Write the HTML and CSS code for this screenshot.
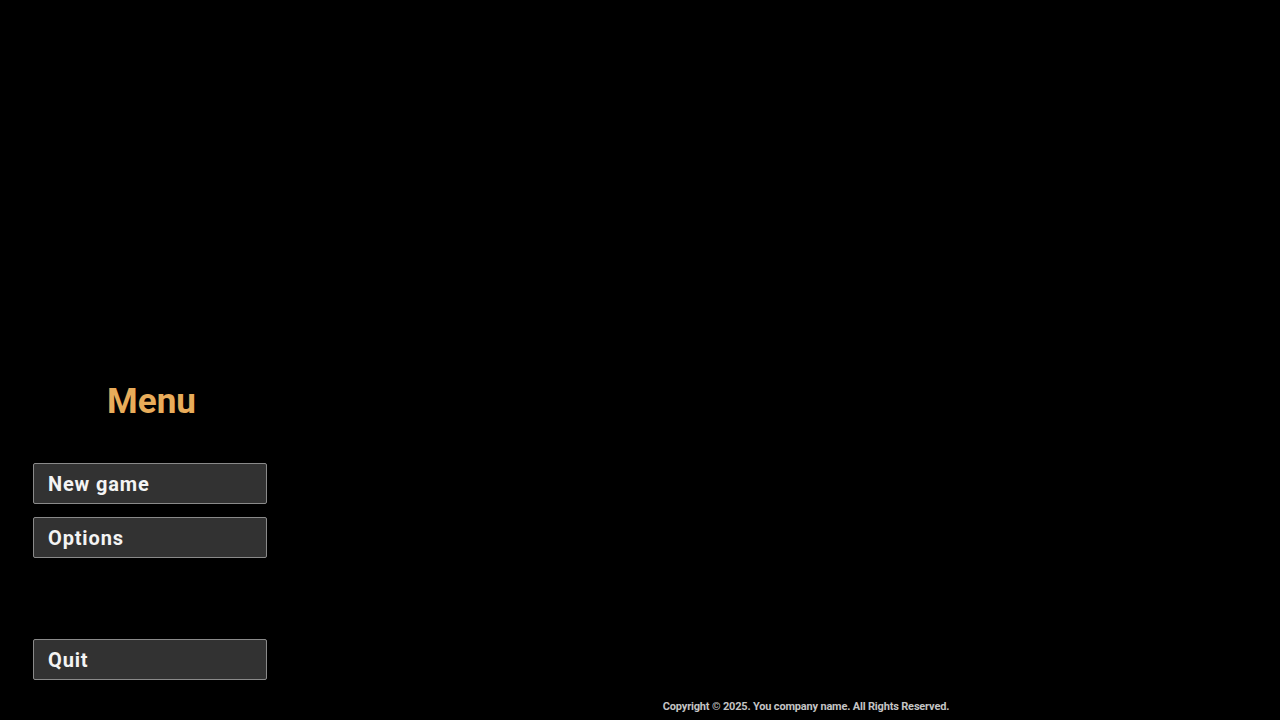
FILE: index.html
```html
<!DOCTYPE html>
<html lang="en">
<head>
  <meta charset="UTF-8">
  <meta name="viewport" content="width=device-width, initial-scale=1.0">
  <title>Menu</title>
  <link rel="stylesheet" href="styles.css">
</head>
<body>
  <div class="screen">
    <aside class="sidebar">
      <h1 class="title">Menu</h1>
      <nav class="menu">
        <button class="menu-btn">New game</button>
        <button class="menu-btn">Options</button>
        <button class="menu-btn quit">Quit</button>
      </nav>
    </aside>
    <main class="main">
      <footer>Copyright © 2025. You company name. All Rights Reserved.</footer>
    </main>
  </div>
</body>
</html>
```

FILE: styles.css
```css
html, body {
  margin: 0;
  height: 100%;
}
body {
  background: #000;
  color: white;
  font-family: Roboto, 'Liberation Sans', sans-serif;
  overflow: hidden;
}
.screen {
  display: flex;
  height: 720px;
}
.sidebar {
  width: 234px;
  padding: 0 33px 40px 33px;
  display: flex;
  flex-direction: column;
  justify-content: flex-end;
}
.title {
  margin: 0 0 40px 0;
  padding-left: 3px;
  text-align: center;
  font-size: 35px;
  font-weight: 700;
  color: #e8ac5a;
  line-height: 42px;
}
.menu {
  display: flex;
  flex-direction: column;
  gap: 13px;
}
.menu-btn {
  height: 41px;
  box-sizing: border-box;
  padding: 0 14px;
  background: #323232;
  border: 1px solid #8a8a8a;
  border-radius: 2px;
  color: #f4f4f4;
  font-family: inherit;
  font-size: 20px;
  font-weight: 700;
  letter-spacing: 0.85px;
  text-align: left;
  cursor: pointer;
}
.menu-btn:hover {
  background: #3c3c3c;
}
.quit {
  margin-top: 68px;
}
.main {
  flex: 1;
  display: flex;
  flex-direction: column;
  justify-content: flex-end;
  align-items: center;
  padding: 0 0 7px 32px;
}
footer {
  font-size: 11px;
  font-weight: 700;
  letter-spacing: -0.18px;
  color: #c4c4c4;
}
```
